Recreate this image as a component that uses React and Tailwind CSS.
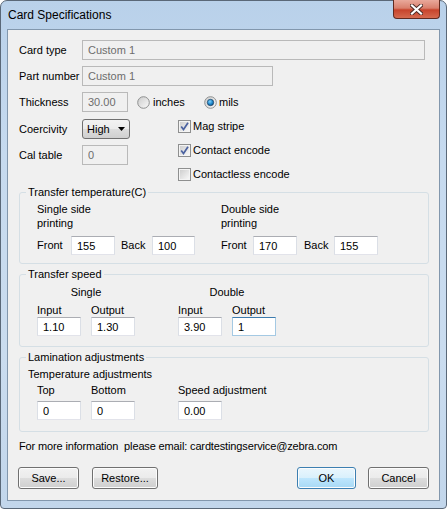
import React from 'react'

const Field = ({ w, value, disabled, focused, h = 'h-[19px]' }) => (
  <input
    readOnly
    value={value}
    className={[
      w,
      h,
      'px-[5px] text-[11px] outline-none border',
      disabled
        ? 'bg-[#f0f0f0] border-[#b9b9b9] text-[#6d6d6d]'
        : focused
        ? 'bg-white border-[#a4c9e3] border-t-[#3d7bad] text-black'
        : 'bg-white border-[#e2e3ea] border-t-[#abadb3] border-l-[#dbdfe6] border-r-[#dbdfe6] text-black',
    ].join(' ')}
  />
)

const Btn = ({ w, children, primary }) => (
  <button
    className={[
      w,
      'h-[22px] rounded-[3px] border text-[11px] text-black shadow-[inset_0_0_0_1px_#fcfcfc]',
      primary
        ? 'border-[#3c7fb1] bg-[linear-gradient(#eaf6fd_0%,#d9f0fc_50%,#bee6fd_50%,#a7d9f5_100%)]'
        : 'border-[#707070] bg-[linear-gradient(#f2f2f2_0%,#ebebeb_50%,#dddddd_50%,#cfcfcf_100%)]',
    ].join(' ')}
  >
    {children}
  </button>
)

const Radio = ({ checked }) => (
  <svg width="13" height="13" viewBox="0 0 13 13">
    <defs>
      <linearGradient id="rg" x1="0" y1="0" x2="1" y2="1">
        <stop offset="0" stopColor="#cbcbcb" />
        <stop offset="1" stopColor="#fbfbfb" />
      </linearGradient>
      <radialGradient id="rd" cx="0.4" cy="0.35" r="0.7">
        <stop offset="0" stopColor="#7fd0ff" />
        <stop offset="0.6" stopColor="#1b86c9" />
        <stop offset="1" stopColor="#0b4d86" />
      </radialGradient>
    </defs>
    <circle cx="6.5" cy="6.5" r="5.8" fill="url(#rg)" stroke="#8e8f8f" strokeWidth="1" />
    {checked && <circle cx="6.5" cy="6.5" r="3.2" fill="url(#rd)" stroke="#1f3f5f" strokeWidth="0.7" />}
  </svg>
)

const Check = ({ checked, label }) => (
  <div className="h-[24px] flex items-center gap-[2px]">
    <svg width="13" height="13" viewBox="0 0 13 13">
      <defs>
        <linearGradient id="cg" x1="0" y1="0" x2="1" y2="1">
          <stop offset="0" stopColor="#cfcfcf" />
          <stop offset="1" stopColor="#f7f7f7" />
        </linearGradient>
      </defs>
      <rect x="0.5" y="0.5" width="12" height="12" fill="#f4f4f4" stroke="#8e8f8f" />
      <rect x="2" y="2" width="9" height="9" fill="url(#cg)" />
      {checked && <path d="M3.2 6.4l2.3 3.1L10 2.8" stroke="#4b62a0" strokeWidth="1.7" fill="none" />}
    </svg>
    <span>{label}</span>
  </div>
)

const Group = ({ title, children, className }) => (
  <fieldset className={`ml-[11px] w-[410px] border border-[#d5dfe5] rounded-[3px] ${className}`}>
    <legend className="ml-[6px] px-[2px] leading-[12px]">{title}</legend>
    {children}
  </fieldset>
)

export default function App() {
  return (
    <div className="w-[447px] h-[509px] bg-white font-['Liberation_Sans',Arial,sans-serif] text-[11px] text-black">
      <div className="w-[447px] h-[509px] flex flex-col border border-[#5a6878] rounded-t-[7px] rounded-b-[4px] bg-[linear-gradient(180deg,#b9d1ea_0%,#c6daef_30%,#cadcef_70%,#c2d6eb_100%)]">
        {/* title bar */}
        <div className="h-[28px] flex justify-between">
          <div className="pl-[7px] flex items-center text-[12px] text-black">Card Specifications</div>
          <div className="mr-[6px] w-[47px] h-[19px] -mt-[1px] flex items-center justify-center rounded-b-[4px] border border-[#612a20] border-t-0 bg-[linear-gradient(#e9a99b_0%,#d9806d_45%,#c7442c_55%,#d56a4f_100%)]">
            <svg width="13" height="11" viewBox="0 0 13 11">
              <path d="M2 1.5l9 8M11 1.5l-9 8" stroke="#4a2a24" strokeWidth="4" strokeLinecap="square" />
              <path d="M2 1.5l9 8M11 1.5l-9 8" stroke="#ffffff" strokeWidth="2.2" strokeLinecap="square" />
            </svg>
          </div>
        </div>

        {/* client area */}
        <div className="ml-[6px] w-[433px] h-[472px] border border-[#8297ad] bg-[#f0f0f0] flex flex-col">
          <div className="pl-[11px] pt-[10px]">
            <div className="flex items-center">
              <span className="w-[63px]">Card type</span>
              <Field w="w-[343px]" h="h-[20px]" value="Custom 1" disabled />
            </div>
            <div className="flex items-center mt-[6px]">
              <span className="w-[63px]">Part number</span>
              <Field w="w-[191px]" h="h-[20px]" value="Custom 1" disabled />
            </div>
            <div className="flex items-center mt-[6px]">
              <span className="w-[63px]">Thickness</span>
              <Field w="w-[46px]" h="h-[20px]" value="30.00" disabled />
              <div className="ml-[9px] w-[67px] flex items-center gap-[3px]">
                <Radio />
                <span>inches</span>
              </div>
              <div className="flex items-center gap-[2px]">
                <Radio checked />
                <span>mils</span>
              </div>
            </div>
            <div className="flex mt-[2px]">
              <div className="w-[159px]">
                <div className="flex items-center mt-[5px]">
                  <span className="w-[63px]">Coercivity</span>
                  <div className="w-[48px] h-[20px] flex items-center justify-between pl-[4px] pr-[4px] border border-[#707070] rounded-[3px] bg-[linear-gradient(#f2f2f2_0%,#ebebeb_50%,#dddddd_50%,#cfcfcf_100%)]">
                    <span>High</span>
                    <svg width="7" height="4" viewBox="0 0 7 4">
                      <path d="M0 0h7L3.5 4z" fill="#000" />
                    </svg>
                  </div>
                </div>
                <div className="flex items-center mt-[6px]">
                  <span className="w-[63px]">Cal table</span>
                  <Field w="w-[46px]" h="h-[20px]" value="0" disabled />
                </div>
              </div>
              <div>
                <Check checked label="Mag stripe" />
                <Check checked label="Contact encode" />
                <Check label="Contactless encode" />
              </div>
            </div>
          </div>

          <Group title="Transfer temperature(C)" className="pb-[8px]">
            <div className="pl-[17px] pt-[4px] flex">
              <div className="w-[184px]">
                <div className="leading-[14px]">Single side<br />printing</div>
                <div className="flex items-center mt-[6px]">
                  <span className="w-[34px]">Front</span>
                  <Field w="w-[44px]" value="155" />
                  <span className="ml-[6px] w-[31px]">Back</span>
                  <Field w="w-[43px]" value="100" />
                </div>
              </div>
              <div>
                <div className="leading-[14px]">Double side<br />printing</div>
                <div className="flex items-center mt-[6px]">
                  <span className="w-[32px]">Front</span>
                  <Field w="w-[44px]" value="170" />
                  <span className="ml-[7px] w-[30px]">Back</span>
                  <Field w="w-[44px]" value="155" />
                </div>
              </div>
            </div>
          </Group>

          <Group title="Transfer speed" className="mt-[4px] pb-[10px]">
            <div className="pl-[17px] pt-[5px] flex">
              <div className="w-[98px]">
                <div className="leading-[14px] text-center">Single</div>
                <div className="flex gap-[10px] mt-[4px]">
                  <div className="w-[44px]">
                    <div className="leading-[14px]">Input</div>
                    <Field w="w-[44px]" value="1.10" />
                  </div>
                  <div className="w-[44px]">
                    <div className="leading-[14px]">Output</div>
                    <Field w="w-[44px]" value="1.30" />
                  </div>
                </div>
              </div>
              <div className="ml-[43px] w-[98px]">
                <div className="leading-[14px] text-center">Double</div>
                <div className="flex gap-[10px] mt-[4px]">
                  <div className="w-[44px]">
                    <div className="leading-[14px]">Input</div>
                    <Field w="w-[44px]" value="3.90" />
                  </div>
                  <div className="w-[44px]">
                    <div className="leading-[14px]">Output</div>
                    <Field w="w-[44px]" value="1" focused />
                  </div>
                </div>
              </div>
            </div>
          </Group>

          <Group title="Lamination adjustments" className="mt-[4px] pb-[11px]">
            <div className="pl-[8px] pt-[4px] leading-[14px]">Temperature adjustments</div>
            <div className="pl-[17px] mt-[2px] flex">
              <div className="w-[54px]">
                <div className="leading-[14px]">Top</div>
                <div className="mt-[4px]"><Field w="w-[44px]" value="0" /></div>
              </div>
              <div className="w-[87px]">
                <div className="leading-[14px]">Bottom</div>
                <div className="mt-[4px]"><Field w="w-[44px]" value="0" /></div>
              </div>
              <div>
                <div className="leading-[14px]">Speed adjustment</div>
                <div className="mt-[4px]"><Field w="w-[44px]" value="0.00" /></div>
              </div>
            </div>
          </Group>

          <div className="pl-[11px] mt-[7px] leading-[14px] tracking-[-0.14px]">
            For more information&nbsp; please email: cardtestingservice@zebra.com
          </div>

          <div className="flex mt-[14px] pl-[10px] pr-[10px]">
            <Btn w="w-[61px]">Save...</Btn>
            <div className="ml-[13px]">
              <Btn w="w-[66px]">Restore...</Btn>
            </div>
            <div className="flex-1" />
            <Btn w="w-[59px]" primary>OK</Btn>
            <div className="ml-[12px]">
              <Btn w="w-[61px]">Cancel</Btn>
            </div>
          </div>
        </div>
      </div>
    </div>
  )
}
